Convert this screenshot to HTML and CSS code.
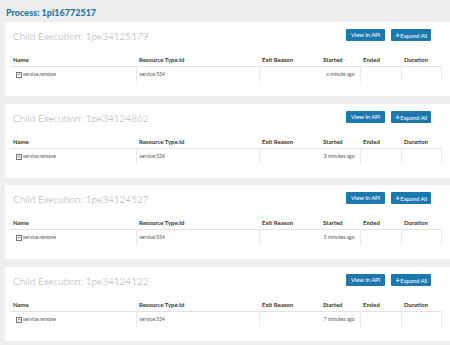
FILE: index.html
```html
<!DOCTYPE html>
<html lang="en">
<head>
  <meta charset="UTF-8" />
  <title>Process 1pi16772517</title>
  <link rel="stylesheet" href="styles.css">
</head>
<body>
  <div class="page">
    <h1 class="process-title">Process: 1pi16772517</h1>

    <div class="panel">
      <div class="panel-head">
        <div class="panel-title">Child Execution: 1pe34125179</div>
        <div class="actions">
          <button class="btn">View In API</button>
          <button class="btn"><span class="plus">+</span>Expand All</button>
        </div>
      </div>
      <table class="exec-table">
        <tr><th>Name</th><th>Resource Type:Id</th><th>Exit Reason</th><th>Started</th><th>Ended</th><th>Duration</th></tr>
        <tr><td><span class="toggle">+</span>service.remove</td><td>service:534</td><td></td><td class="started">a minute ago</td><td></td><td>-</td></tr>
      </table>
    </div>

    <div class="panel">
      <div class="panel-head">
        <div class="panel-title">Child Execution: 1pe34124862</div>
        <div class="actions">
          <button class="btn">View In API</button>
          <button class="btn"><span class="plus">+</span>Expand All</button>
        </div>
      </div>
      <table class="exec-table">
        <tr><th>Name</th><th>Resource Type:Id</th><th>Exit Reason</th><th>Started</th><th>Ended</th><th>Duration</th></tr>
        <tr><td><span class="toggle">+</span>service.remove</td><td>service:534</td><td></td><td class="started">3 minutes ago</td><td></td><td>-</td></tr>
      </table>
    </div>

    <div class="panel">
      <div class="panel-head">
        <div class="panel-title">Child Execution: 1pe34124527</div>
        <div class="actions">
          <button class="btn">View In API</button>
          <button class="btn"><span class="plus">+</span>Expand All</button>
        </div>
      </div>
      <table class="exec-table">
        <tr><th>Name</th><th>Resource Type:Id</th><th>Exit Reason</th><th>Started</th><th>Ended</th><th>Duration</th></tr>
        <tr><td><span class="toggle">+</span>service.remove</td><td>service:534</td><td></td><td class="started">5 minutes ago</td><td></td><td>-</td></tr>
      </table>
    </div>

    <div class="panel">
      <div class="panel-head">
        <div class="panel-title">Child Execution: 1pe34124122</div>
        <div class="actions">
          <button class="btn">View In API</button>
          <button class="btn"><span class="plus">+</span>Expand All</button>
        </div>
      </div>
      <table class="exec-table">
        <tr><th>Name</th><th>Resource Type:Id</th><th>Exit Reason</th><th>Started</th><th>Ended</th><th>Duration</th></tr>
        <tr><td><span class="toggle">+</span>service.remove</td><td>service:534</td><td></td><td class="started">7 minutes ago</td><td></td><td>-</td></tr>
      </table>
    </div>
  </div>
</body>
</html>
```

FILE: styles.css
```css
body {
  margin: 0;
  background: #eceeef;
  font-family: Lato, 'Liberation Sans', sans-serif;
  color: #333;
  overflow: hidden;
}

.page {
  padding: 6px 0 0 5px;
}

.process-title {
  margin: 0 0 3px 1px;
  font-size: 9px;
  line-height: 13px;
  font-weight: 900;
  color: #2674a3;
}

.panel {
  background: white;
  width: 460px;
  height: 74px;
  margin-bottom: 7.5px;
  box-sizing: border-box;
  padding: 7px 0 0 5px;
}

.panel-head {
  display: flex;
  align-items: center;
  width: 418px;
  height: 12px;
  padding-left: 3px;
}

.panel-title {
  flex: 1;
  font-size: 10px;
  font-weight: 300;
  color: #a9a9a9;
  padding-top: 2px;
}

.actions {
  display: flex;
  gap: 6px;
}

.btn {
  background: #1d78ae;
  color: white;
  border: none;
  border-radius: 1px;
  height: 12px;
  padding: 0 5px;
  font-family: Lato, 'Liberation Sans', sans-serif;
  font-size: 6px;
  line-height: 12px;
  letter-spacing: -0.1px;
}

.btn + .btn {
  padding: 0 4px;
}

.plus {
  font-weight: bold;
  font-size: 8px;
  margin-right: 0.5px;
}

.exec-table {
  border-collapse: collapse;
  margin-top: 15px;
  width: 432px;
  table-layout: fixed;
}

.exec-table th {
  font-size: 6px;
  font-weight: bold;
  color: #333;
  text-align: left;
  padding: 0 0 3px 3px;
  height: 7px;
  border-bottom: 1px solid #e3e3e3;
}

.exec-table th:nth-child(1) { width: 123px; }
.exec-table th:nth-child(2) { width: 120px; }
.exec-table th:nth-child(3) { width: 58px; }
.exec-table th:nth-child(4) { width: 37px; }
.exec-table th:nth-child(5) { width: 38px; }

.exec-table td {
  font-size: 5px;
  color: #555;
  height: 14px;
  padding: 1px 0 0 3px;
  vertical-align: top;
  line-height: 13px;
  border-left: 1px solid #e8e8e8;
}

.exec-table td:first-child {
  border-left: none;
  padding-left: 6px;
}

.exec-table td:last-child {
  border-right: 1px solid #e8e8e8;
  color: #bbb;
}

.exec-table td.started {
  border-left: none;
  text-align: right;
  padding-right: 5px;
}

.toggle {
  display: inline-block;
  width: 4px;
  height: 4px;
  border: 0.5px solid #777;
  font-size: 5px;
  line-height: 4px;
  text-align: center;
  margin-right: 1px;
  vertical-align: -1px;
}
```
